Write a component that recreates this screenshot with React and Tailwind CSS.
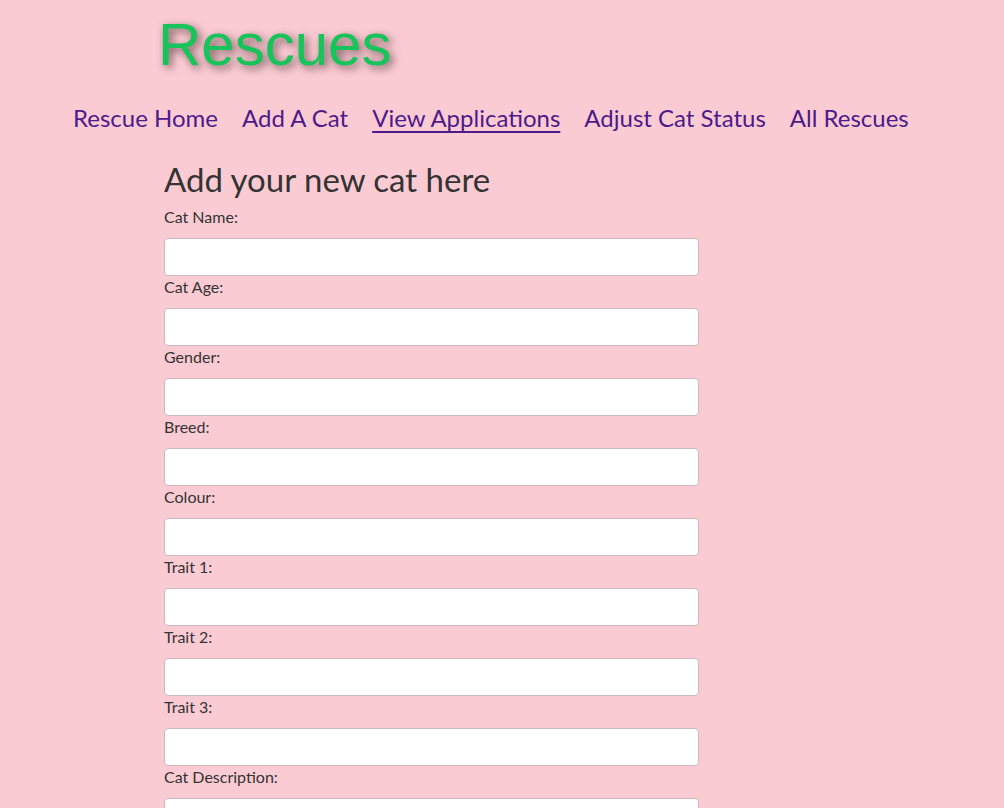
const links = [
  { label: 'Rescue Home' },
  { label: 'Add A Cat' },
  { label: 'View Applications', active: true },
  { label: 'Adjust Cat Status' },
  { label: 'All Rescues' },
]

const fields = ['Cat Name:', 'Cat Age:', 'Gender:', 'Breed:', 'Colour:', 'Trait 1:', 'Trait 2:', 'Trait 3:', 'Cat Description:']

export default function App() {
  return (
    <div className="min-h-screen bg-[#fbcbd3] font-['Lato',sans-serif] text-[#333]">
      <header className="pl-[158px] pt-[8px]">
        <h1 className="font-['Liberation_Sans',Arial,sans-serif] text-[60px] leading-[74px] text-[#17c45a] [text-shadow:3px_3px_8px_rgba(60,40,40,0.75)]">
          Rescues
        </h1>
      </header>

      <nav className="flex gap-[24px] pl-[73px] pt-[16px]">
        {links.map(l => (
          <a key={l.label} href="#"
            className={`text-[24px] leading-[40px] text-[#4d1a8a] ${l.active ? 'underline underline-offset-[4px]' : ''}`}>
            {l.label}
          </a>
        ))}
      </nav>

      <main className="pl-[164px] pt-[24px]">
        <h2 className="text-[33px] leading-[34px] mb-[10px]">Add your new cat here</h2>
        <form>
          {fields.map(f => (
            <div key={f}>
              <label className="block pt-[1px] text-[16px] leading-5 mb-[11px]">{f}</label>
              <input type="text"
                className="block w-[535px] h-[38px] bg-white border border-[#c9b9bd] rounded-[4px] px-3 outline-none" />
            </div>
          ))}
        </form>
      </main>
    </div>
  )
}
